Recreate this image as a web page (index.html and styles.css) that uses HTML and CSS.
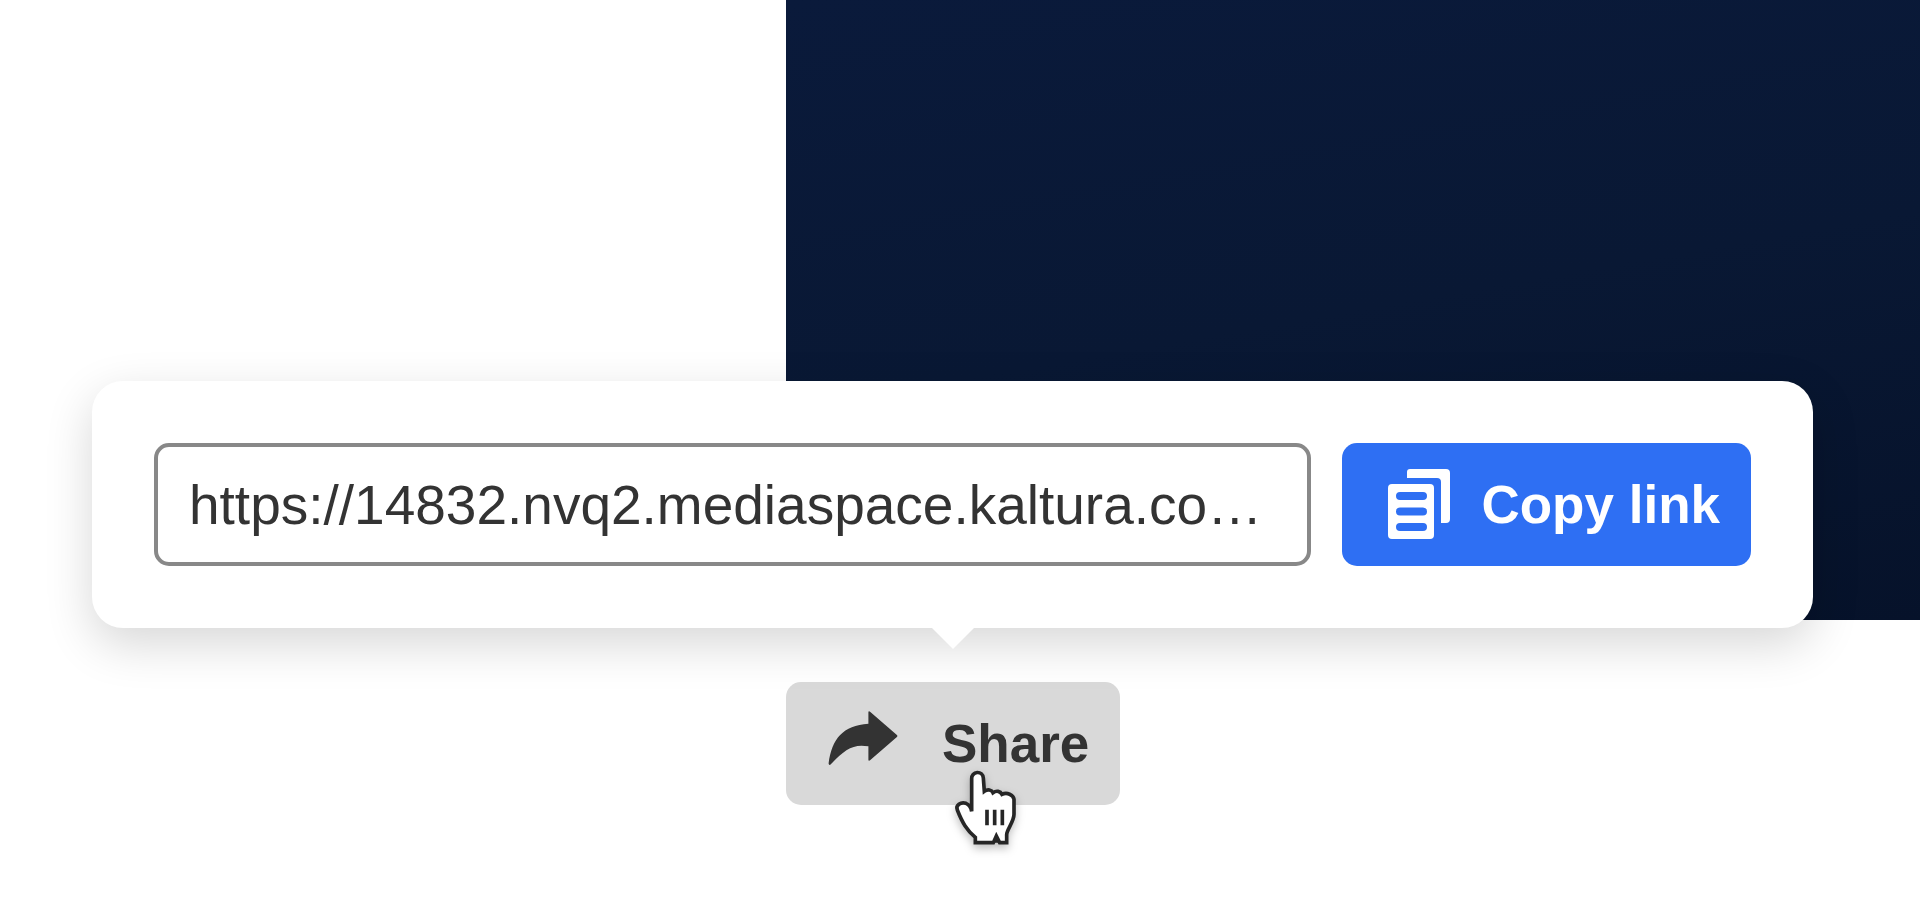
FILE: index.html
```html
<!DOCTYPE html>
<html lang="en">
<head>
<meta charset="utf-8">
<title>Share</title>
<link rel="stylesheet" href="styles.css">
</head>
<body>
<main class="page">
  <section class="player" aria-label="Video player"></section>
  <div class="actions">
    <button class="btn btn-share" type="button">
      <svg class="icon-share" viewBox="0 0 72 58" aria-hidden="true"><path d="M42 2.5Q42 .5 44 2L71 25.500Q72 26.500 71 27.500L44 51Q42 52.500 42 50.500V37C27 34 18 40 4 55Q2 57 1.500 54.500C5 29 16 16 42 14Z"/></svg>
      <span>Share</span>
    </button>
  </div>
  <div class="popover" role="dialog" aria-label="Share link">
    <input class="link-field" type="text" readonly aria-label="Link" value="https://14832.nvq2.mediaspace.kaltura.co…">
    <button class="btn btn-copy" type="button">
      <svg class="icon-copy" viewBox="0 0 62 70" aria-hidden="true"><path d="M22 0H58Q62 0 62 4V50Q62 54 58 54H53V13Q53 9 49 9H19V3Q19 0 22 0Z"/><path fill-rule="evenodd" d="M4 15H42Q46 15 46 19V66Q46 70 42 70H4Q0 70 0 66V19Q0 15 4 15ZM12 23a4 4 0 0 0 0 8H35a4 4 0 0 0 0-8ZM12 38.500a4 4 0 0 0 0 8H35a4 4 0 0 0 0-8ZM12 54a4 4 0 0 0 0 8H35a4 4 0 0 0 0-8Z"/></svg>
      <span>Copy link</span>
    </button>
  </div>
  <svg class="cursor" viewBox="0 0 270 330" aria-hidden="true"><path class="hand" d="M95 184V86A17.500 17.500 0 0 1 130 84L133 124C143 117 155 119 159 128C169 121 181 123 186 133C201 126 220 134 222 148V193C222 215 200 240 200 254V278H179L169 258L160 278H106V262C80 240 67 218 52 180C46 166 62 155 78 160C88 164 93 172 95 184Z"/><path class="notch" d="M159 278L169 252L179 278Z"/><path class="lines" d="M141 179V226M164 179V226M187 179V226"/></svg>
</main>
</body>
</html>
```
FILE: styles.css
```css
* { box-sizing: border-box; }

body {
  margin: 0;
  background: #fff;
  color: #333;
  font-family: "Liberation Sans", Arial, sans-serif;
  font-size: 55px;
}

.page {
  position: relative;
  min-height: 100vh;
  padding-left: 786px;
}

.player {
  height: 620px;
  background: linear-gradient(170deg, #0a1a3b 0%, #091834 50%, #06122a 100%);
}

.actions {
  display: flex;
  padding-top: 62px;
}

.btn {
  display: flex;
  align-items: center;
  height: 123px;
  border: 0;
  border-radius: 15px;
  font: bold 53px "Liberation Sans", Arial, sans-serif;
  white-space: nowrap;
  cursor: pointer;
}

.btn svg { flex: none; fill: currentColor; }

.btn-share {
  gap: 44px;
  padding: 0 31px 0 41px;
  background: #d9d9d9;
  color: #333;
}

.btn-copy {
  gap: 31px;
  padding: 0 31px 0 46px;
  background: #2e6ff3;
  color: #fff;
}

.icon-share { width: 71px; height: 57px; margin-bottom: 10px; }
.icon-copy { width: 62px; height: 70px; margin-bottom: 2px; }

.popover {
  position: absolute;
  top: 381px;
  left: 92px;
  right: 107px;
  display: flex;
  gap: 31px;
  padding: 62px;
  border-radius: 31px;
  background: #fff;
  box-shadow: 0 16px 48px rgba(0, 0, 0, 0.16);
}

.popover::after {
  content: "";
  position: absolute;
  top: 100%;
  left: 50%;
  margin: -1px 0 0 -22px;
  border: 22px solid transparent;
  border-top-color: #fff;
  border-bottom: 0;
}

.link-field {
  flex: 1;
  min-width: 0;
  height: 123px;
  padding: 0 31px;
  border: 4px solid #888;
  border-radius: 15px;
  background: #fff;
  color: #333;
  font: inherit;
  text-overflow: ellipsis;
}

.cursor {
  position: absolute;
  top: 750px;
  left: 940px;
  width: 90px;
  height: 110px;
  overflow: visible;
  filter: drop-shadow(0 4px 4px rgba(0, 0, 0, 0.25));
  pointer-events: none;
}

.hand { fill: #fff; stroke: #262626; stroke-width: 11; }
.notch { fill: #262626; }
.lines { fill: none; stroke: #262626; stroke-width: 11; }
```
